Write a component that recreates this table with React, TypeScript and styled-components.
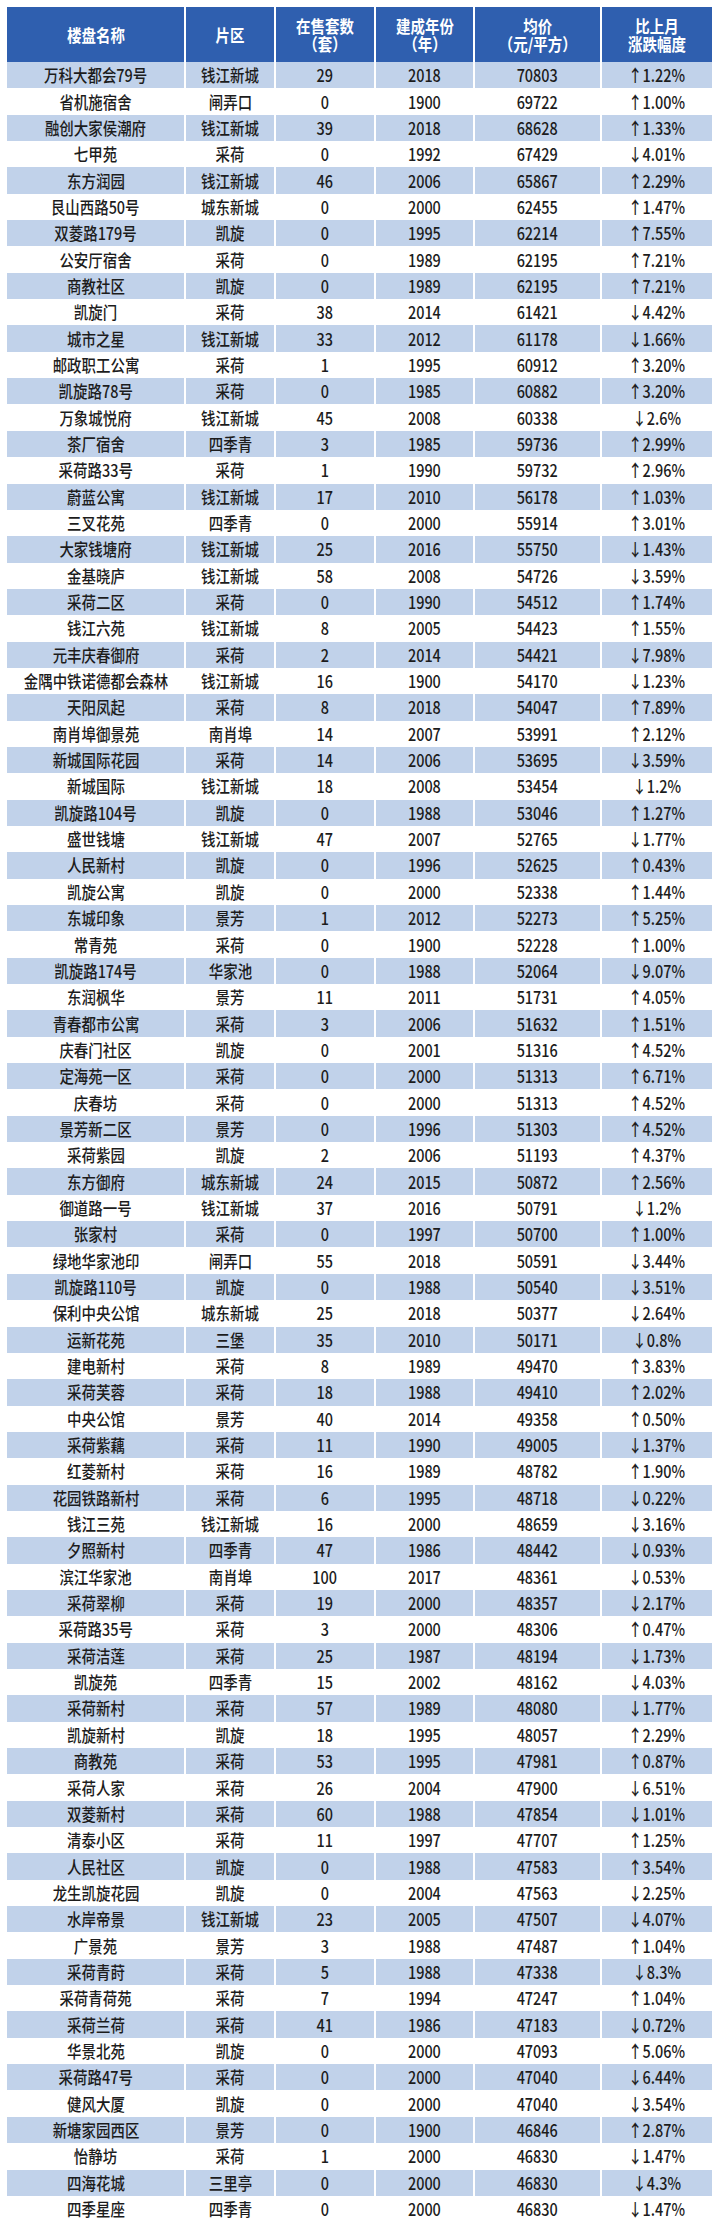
import React from "react"
import styled, { createGlobalStyle } from "styled-components"

const GlobalStyle = createGlobalStyle`
  html, body {
    margin: 0;
    background: #fff;
  }
  body {
    font-family: "Noto Sans CJK SC", "Noto Sans", sans-serif;
    color: #1f1f1f;
  }
`

const Page = styled.div`
  padding: 7px 8px 0 7px;
`

const Table = styled.div`
  display: flex;
  flex-direction: column;
`

const Row = styled.div<{ $head?: boolean }>`
  display: grid;
  grid-template-columns: 177px 88px 98px 97px 125px 110px;
  column-gap: 2px;
  height: ${p => (p.$head ? "55px" : "26.35px")};
  background: #fff;
`

const Cell = styled.div<{ $tone: "head" | "blue" | "white" }>`
  display: flex;
  align-items: center;
  justify-content: center;
  overflow: hidden;
  background: ${p =>
    p.$tone === "head" ? "#2f5faf" : p.$tone === "blue" ? "#c1d2ea" : "#fff"};
  color: ${p => (p.$tone === "head" ? "#fff" : "#1c1c1c")};
  font-weight: ${p => (p.$tone === "head" ? 700 : 500)};
  font-size: 17px;
`

const Text = styled.span`
  display: inline-block;
  white-space: nowrap;
  text-align: center;
  line-height: 18px;
  transform: scaleX(0.85);
`

const Line = styled.span`
  display: block;
`

const headers = [
  ["楼盘名称"],
  ["片区"],
  ["在售套数", "（套）"],
  ["建成年份", "（年）"],
  ["均价", "（元/平方）"],
  ["比上月", "涨跌幅度"],
]

const rows: string[][] = [
  ["万科大都会79号", "钱江新城", "29", "2018", "70803", "↑1.22%"],
  ["省机施宿舍", "闸弄口", "0", "1900", "69722", "↑1.00%"],
  ["融创大家侯潮府", "钱江新城", "39", "2018", "68628", "↑1.33%"],
  ["七甲苑", "采荷", "0", "1992", "67429", "↓4.01%"],
  ["东方润园", "钱江新城", "46", "2006", "65867", "↑2.29%"],
  ["艮山西路50号", "城东新城", "0", "2000", "62455", "↑1.47%"],
  ["双菱路179号", "凯旋", "0", "1995", "62214", "↑7.55%"],
  ["公安厅宿舍", "采荷", "0", "1989", "62195", "↑7.21%"],
  ["商教社区", "凯旋", "0", "1989", "62195", "↑7.21%"],
  ["凯旋门", "采荷", "38", "2014", "61421", "↓4.42%"],
  ["城市之星", "钱江新城", "33", "2012", "61178", "↓1.66%"],
  ["邮政职工公寓", "采荷", "1", "1995", "60912", "↑3.20%"],
  ["凯旋路78号", "采荷", "0", "1985", "60882", "↑3.20%"],
  ["万象城悦府", "钱江新城", "45", "2008", "60338", "↓2.6%"],
  ["茶厂宿舍", "四季青", "3", "1985", "59736", "↑2.99%"],
  ["采荷路33号", "采荷", "1", "1990", "59732", "↑2.96%"],
  ["蔚蓝公寓", "钱江新城", "17", "2010", "56178", "↑1.03%"],
  ["三叉花苑", "四季青", "0", "2000", "55914", "↑3.01%"],
  ["大家钱塘府", "钱江新城", "25", "2016", "55750", "↓1.43%"],
  ["金基晓庐", "钱江新城", "58", "2008", "54726", "↓3.59%"],
  ["采荷二区", "采荷", "0", "1990", "54512", "↑1.74%"],
  ["钱江六苑", "钱江新城", "8", "2005", "54423", "↑1.55%"],
  ["元丰庆春御府", "采荷", "2", "2014", "54421", "↓7.98%"],
  ["金隅中铁诺德都会森林", "钱江新城", "16", "1900", "54170", "↓1.23%"],
  ["天阳凤起", "采荷", "8", "2018", "54047", "↑7.89%"],
  ["南肖埠御景苑", "南肖埠", "14", "2007", "53991", "↑2.12%"],
  ["新城国际花园", "采荷", "14", "2006", "53695", "↓3.59%"],
  ["新城国际", "钱江新城", "18", "2008", "53454", "↓1.2%"],
  ["凯旋路104号", "凯旋", "0", "1988", "53046", "↑1.27%"],
  ["盛世钱塘", "钱江新城", "47", "2007", "52765", "↓1.77%"],
  ["人民新村", "凯旋", "0", "1996", "52625", "↑0.43%"],
  ["凯旋公寓", "凯旋", "0", "2000", "52338", "↑1.44%"],
  ["东城印象", "景芳", "1", "2012", "52273", "↑5.25%"],
  ["常青苑", "采荷", "0", "1900", "52228", "↑1.00%"],
  ["凯旋路174号", "华家池", "0", "1988", "52064", "↓9.07%"],
  ["东润枫华", "景芳", "11", "2011", "51731", "↑4.05%"],
  ["青春都市公寓", "采荷", "3", "2006", "51632", "↑1.51%"],
  ["庆春门社区", "凯旋", "0", "2001", "51316", "↑4.52%"],
  ["定海苑一区", "采荷", "0", "2000", "51313", "↑6.71%"],
  ["庆春坊", "采荷", "0", "2000", "51313", "↑4.52%"],
  ["景芳新二区", "景芳", "0", "1996", "51303", "↑4.52%"],
  ["采荷紫园", "凯旋", "2", "2006", "51193", "↑4.37%"],
  ["东方御府", "城东新城", "24", "2015", "50872", "↑2.56%"],
  ["御道路一号", "钱江新城", "37", "2016", "50791", "↓1.2%"],
  ["张家村", "采荷", "0", "1997", "50700", "↑1.00%"],
  ["绿地华家池印", "闸弄口", "55", "2018", "50591", "↓3.44%"],
  ["凯旋路110号", "凯旋", "0", "1988", "50540", "↓3.51%"],
  ["保利中央公馆", "城东新城", "25", "2018", "50377", "↓2.64%"],
  ["运新花苑", "三堡", "35", "2010", "50171", "↓0.8%"],
  ["建电新村", "采荷", "8", "1989", "49470", "↑3.83%"],
  ["采荷芙蓉", "采荷", "18", "1988", "49410", "↑2.02%"],
  ["中央公馆", "景芳", "40", "2014", "49358", "↑0.50%"],
  ["采荷紫藕", "采荷", "11", "1990", "49005", "↓1.37%"],
  ["红菱新村", "采荷", "16", "1989", "48782", "↑1.90%"],
  ["花园铁路新村", "采荷", "6", "1995", "48718", "↓0.22%"],
  ["钱江三苑", "钱江新城", "16", "2000", "48659", "↓3.16%"],
  ["夕照新村", "四季青", "47", "1986", "48442", "↓0.93%"],
  ["滨江华家池", "南肖埠", "100", "2017", "48361", "↓0.53%"],
  ["采荷翠柳", "采荷", "19", "2000", "48357", "↓2.17%"],
  ["采荷路35号", "采荷", "3", "2000", "48306", "↑0.47%"],
  ["采荷洁莲", "采荷", "25", "1987", "48194", "↓1.73%"],
  ["凯旋苑", "四季青", "15", "2002", "48162", "↓4.03%"],
  ["采荷新村", "采荷", "57", "1989", "48080", "↓1.77%"],
  ["凯旋新村", "凯旋", "18", "1995", "48057", "↑2.29%"],
  ["商教苑", "采荷", "53", "1995", "47981", "↑0.87%"],
  ["采荷人家", "采荷", "26", "2004", "47900", "↓6.51%"],
  ["双菱新村", "采荷", "60", "1988", "47854", "↓1.01%"],
  ["清泰小区", "采荷", "11", "1997", "47707", "↑1.25%"],
  ["人民社区", "凯旋", "0", "1988", "47583", "↑3.54%"],
  ["龙生凯旋花园", "凯旋", "0", "2004", "47563", "↓2.25%"],
  ["水岸帝景", "钱江新城", "23", "2005", "47507", "↓4.07%"],
  ["广景苑", "景芳", "3", "1988", "47487", "↑1.04%"],
  ["采荷青莳", "采荷", "5", "1988", "47338", "↓8.3%"],
  ["采荷青荷苑", "采荷", "7", "1994", "47247", "↑1.04%"],
  ["采荷兰荷", "采荷", "41", "1986", "47183", "↓0.72%"],
  ["华景北苑", "凯旋", "0", "2000", "47093", "↑5.06%"],
  ["采荷路47号", "采荷", "0", "2000", "47040", "↓6.44%"],
  ["健风大厦", "凯旋", "0", "2000", "47040", "↓3.54%"],
  ["新塘家园西区", "景芳", "0", "1900", "46846", "↑2.87%"],
  ["怡静坊", "采荷", "1", "2000", "46830", "↓1.47%"],
  ["四海花城", "三里亭", "0", "2000", "46830", "↓4.3%"],
  ["四季星座", "四季青", "0", "2000", "46830", "↓1.47%"],
]

export default function App() {
  return (
    <Page>
      <GlobalStyle />
      <Table>
        <Row $head>
          {headers.map((lines, i) => (
            <Cell key={i} $tone="head">
              <Text>
                {lines.map((l, j) => (
                  <Line key={j}>{l}</Line>
                ))}
              </Text>
            </Cell>
          ))}
        </Row>
        {rows.map((r, i) => (
          <Row key={i}>
            {r.map((v, j) => (
              <Cell key={j} $tone={i % 2 === 0 ? "blue" : "white"}>
                <Text>{v}</Text>
              </Cell>
            ))}
          </Row>
        ))}
      </Table>
    </Page>
  )
}
